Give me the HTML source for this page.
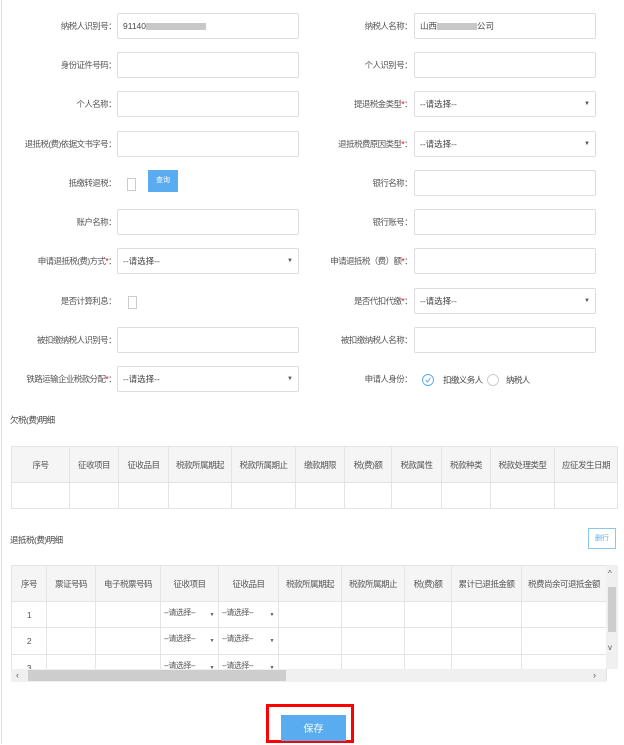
<!DOCTYPE html>
<html><head><meta charset="utf-8"><style>
*{margin:0;padding:0;box-sizing:border-box}
body{width:624px;height:744px;background:#fff;position:relative;overflow:hidden;font-family:"Liberation Sans","Noto Sans CJK SC",sans-serif;font-size:8.5px;color:#444}
.a{position:absolute}
.lbl{position:absolute;text-align:right;line-height:26px;height:26px;letter-spacing:-0.6px;color:#555}
.in{position:absolute;height:26px;border:1px solid #ddd;border-radius:2px;background:#fff;line-height:24px;padding-left:5px;font-size:8.5px;color:#444}
.sel::after{content:"▼";position:absolute;right:5px;top:0;font-size:6px;color:#555}
.r{color:#e00}
.cb{position:absolute;width:9px;height:13px;border:1px solid #ccc;background:#fff}
table{border-collapse:collapse;position:absolute;table-layout:fixed}
td,th{border:1px solid #e4e4e4;font-weight:normal;text-align:center;font-size:8.5px;color:#555;overflow:hidden;white-space:nowrap;letter-spacing:-0.5px}
th{background:#f5f5f5}
.s{font-size:8px;text-align:left;padding-left:3px}
.s span{float:right;font-size:5px;margin-right:4px;line-height:16px}
</style></head><body>
<div class="a" style="left:1px;top:0;width:1px;height:744px;background:#ddd"></div>

<div class="lbl" style="right:508px;top:13px">纳税人识别号：</div>
<div class="in" style="left:117px;top:13px;width:182px">91140<span style="display:inline-block;width:60px;height:7px;background:#c8c8c8;vertical-align:middle"></span></div>
<div class="lbl" style="right:212px;top:13px">纳税人名称：</div>
<div class="in" style="left:414px;top:13px;width:182px">山西<span style="display:inline-block;width:40px;height:7px;background:#c8c8c8;vertical-align:middle"></span>公司</div>

<div class="lbl" style="right:508px;top:52px">身份证件号码：</div>
<div class="in" style="left:117px;top:52px;width:182px"></div>
<div class="lbl" style="right:212px;top:52px">个人识别号：</div>
<div class="in" style="left:414px;top:52px;width:182px"></div>

<div class="lbl" style="right:508px;top:91px">个人名称：</div>
<div class="in" style="left:117px;top:91px;width:182px"></div>
<div class="lbl" style="right:212px;top:91px">提退税金类型<span class="r">*</span>：</div>
<div class="in sel" style="left:414px;top:91px;width:182px">--请选择--</div>

<div class="lbl" style="right:508px;top:131px">退抵税(费)依据文书字号：</div>
<div class="in" style="left:117px;top:131px;width:182px"></div>
<div class="lbl" style="right:212px;top:131px">退抵税费原因类型<span class="r">*</span>：</div>
<div class="in sel" style="left:414px;top:131px;width:182px">--请选择--</div>

<div class="lbl" style="right:508px;top:170px">抵缴转退税：</div>
<div class="cb" style="left:127px;top:178px"></div>
<div class="a" style="left:148px;top:170px;width:30px;height:22px;background:#5aacf0;color:#fff;font-size:7px;text-align:center;line-height:22px">查询</div>
<div class="lbl" style="right:212px;top:170px">银行名称：</div>
<div class="in" style="left:414px;top:170px;width:182px"></div>

<div class="lbl" style="right:508px;top:209px">账户名称：</div>
<div class="in" style="left:117px;top:209px;width:182px"></div>
<div class="lbl" style="right:212px;top:209px">银行账号：</div>
<div class="in" style="left:414px;top:209px;width:182px"></div>

<div class="lbl" style="right:508px;top:248px">申请退抵税(费)方式<span class="r">*</span>：</div>
<div class="in sel" style="left:117px;top:248px;width:182px">--请选择--</div>
<div class="lbl" style="right:212px;top:248px">申请退抵税（费）额<span class="r">*</span>：</div>
<div class="in" style="left:414px;top:248px;width:182px"></div>

<div class="lbl" style="right:508px;top:288px">是否计算利息：</div>
<div class="cb" style="left:128px;top:296px"></div>
<div class="lbl" style="right:212px;top:288px">是否代扣代缴<span class="r">*</span>：</div>
<div class="in sel" style="left:414px;top:288px;width:182px">--请选择--</div>

<div class="lbl" style="right:508px;top:327px">被扣缴纳税人识别号：</div>
<div class="in" style="left:117px;top:327px;width:182px"></div>
<div class="lbl" style="right:212px;top:327px">被扣缴纳税人名称：</div>
<div class="in" style="left:414px;top:327px;width:182px"></div>

<div class="lbl" style="right:508px;top:366px">铁路运输企业税款分配<span class="r">*</span>：</div>
<div class="in sel" style="left:117px;top:366px;width:182px">--请选择--</div>
<div class="lbl" style="right:212px;top:366px">申请人身份：</div>
<svg class="a" style="left:421px;top:373px" width="14" height="14"><circle cx="7" cy="7" r="5.5" fill="none" stroke="#5aacf0"/><path d="M4.5 7 L6.5 9 L9.5 5" fill="none" stroke="#5aacf0"/></svg>
<div class="a" style="left:443px;top:373px;line-height:14px;letter-spacing:-0.6px">扣缴义务人</div>
<svg class="a" style="left:486px;top:373px" width="14" height="14"><circle cx="7" cy="7" r="5.5" fill="none" stroke="#ccc"/></svg>
<div class="a" style="left:506px;top:373px;line-height:14px;letter-spacing:-0.6px">纳税人</div>

<div class="a" style="left:10px;top:414px;letter-spacing:-0.5px">欠税(费)明细</div>
<table style="left:11px;top:446px;width:606px">
<colgroup><col style="width:58px"><col style="width:49px"><col style="width:50px"><col style="width:63px"><col style="width:64px"><col style="width:49px"><col style="width:47px"><col style="width:50px"><col style="width:49px"><col style="width:64px"><col style="width:63px"></colgroup>
<tr style="height:36px"><th>序号</th><th>征收项目</th><th>征收品目</th><th>税款所属期起</th><th>税款所属期止</th><th>缴款期限</th><th>税(费)额</th><th>税款属性</th><th>税款种类</th><th>税款处理类型</th><th>应征发生日期</th></tr>
<tr style="height:26px"><td></td><td></td><td></td><td></td><td></td><td></td><td></td><td></td><td></td><td></td><td></td></tr>
</table>

<div class="a" style="left:10px;top:534px;letter-spacing:-0.5px">退抵税(费)明细</div>
<div class="a" style="left:588px;top:528px;width:28px;height:21px;border:1px solid #8cc4f0;color:#5aacf0;font-size:7px;text-align:center;line-height:19px">删行</div>

<div class="a" style="left:11px;top:565px;width:607px;height:117px;overflow:hidden">
<table style="left:0;top:0;width:595px">
<colgroup><col style="width:35px"><col style="width:49px"><col style="width:65px"><col style="width:58px"><col style="width:60px"><col style="width:63px"><col style="width:63px"><col style="width:47px"><col style="width:70px"><col style="width:85px"></colgroup>
<tr style="height:36px"><th>序号</th><th>票证号码</th><th>电子税票号码</th><th>征收项目</th><th>征收品目</th><th>税款所属期起</th><th>税款所属期止</th><th>税(费)额</th><th>累计已退抵金额</th><th>税费尚余可退抵金额</th></tr>
<tr style="height:26px"><td>1</td><td></td><td></td><td class="s">--请选择--<span>▼</span></td><td class="s">--请选择--<span>▼</span></td><td></td><td></td><td></td><td></td><td></td></tr>
<tr style="height:27px"><td>2</td><td></td><td></td><td class="s">--请选择--<span>▼</span></td><td class="s">--请选择--<span>▼</span></td><td></td><td></td><td></td><td></td><td></td></tr>
<tr style="height:26px"><td>3</td><td></td><td></td><td class="s">--请选择--<span>▼</span></td><td class="s">--请选择--<span>▼</span></td><td></td><td></td><td></td><td></td><td></td></tr>
</table>
<div class="a" style="left:595px;top:0;width:12px;height:104px;background:#f0f0f0"><div class="a" style="left:2px;top:22px;width:8px;height:45px;background:#cdcdcd"></div><div class="a" style="left:2px;top:4px;font-size:8px;color:#555">^</div><div class="a" style="left:2px;top:78px;font-size:8px;color:#555">v</div></div>
<div class="a" style="left:0;top:104px;width:595px;height:13px;background:#f0f0f0"><div class="a" style="left:17px;top:1px;width:258px;height:11px;background:#cdcdcd"></div><div class="a" style="left:5px;top:0;font-size:9px;color:#555;line-height:13px">‹</div><div class="a" style="left:582px;top:0;font-size:9px;color:#555;line-height:13px">›</div></div>
</div>

<div class="a" style="left:266px;top:704px;width:88px;height:39px;border:3px solid #f00"></div>
<div class="a" style="left:281px;top:715px;width:65px;height:26px;background:#5aacf0;color:#fff;font-size:10px;text-align:center;line-height:30px">保存</div>
</body></html>
